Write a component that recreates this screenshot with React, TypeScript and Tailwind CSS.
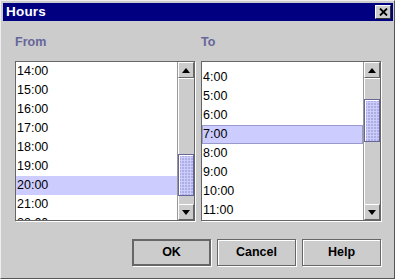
import React from "react";

const FONT = { fontFamily: '"Liberation Sans", Arial, sans-serif' };

function Arrow({ up }: { up?: boolean }) {
  return (
    <svg width="8" height="5" viewBox="0 0 8 5" className="block">
      {up ? <path d="M0 5 L4 0 L8 5 Z" fill="#000" /> : <path d="M0 0 L8 0 L4 5 Z" fill="#000" />}
    </svg>
  );
}

function ScrollButton({ up }: { up?: boolean }) {
  return (
    <div className="flex h-[16px] items-center justify-center border border-t-white border-l-white border-r-[#666666] border-b-[#666666] bg-[#cccccc]">
      <Arrow up={up} />
    </div>
  );
}

function Scrollbar({ thumbTop, thumbHeight }: { thumbTop: number; thumbHeight: number }) {
  return (
    <div className="flex w-[17px] flex-col border-l border-[#999999] bg-[#cccccc]">
      <ScrollButton up />
      <div className="relative flex-1 border-l border-t border-white">
        <div
          className="absolute left-[-1px] right-0 border border-[#666699] bg-[#ccccff] bg-[radial-gradient(circle_at_1px_1px,#8888bb_0.6px,transparent_0.8px)] bg-[length:3px_3px] shadow-[inset_1px_1px_0_#ffffff]"
          style={{ top: thumbTop, height: thumbHeight }}
        />
      </div>
      <ScrollButton />
    </div>
  );
}

function TimeList({
  items,
  selected,
  offset,
  focused,
  thumbTop,
  thumbHeight,
}: {
  items: string[];
  selected: string;
  offset: number;
  focused?: boolean;
  thumbTop: number;
  thumbHeight: number;
}) {
  return (
    <div className="flex h-[160px] border border-[#666666] bg-white shadow-[1px_1px_0_#ffffff]">
      <div className="flex-1 overflow-hidden">
        <div style={{ marginTop: offset }}>
          {items.map((t) => {
            const sel = t === selected;
            return (
              <div
                key={t}
                className={
                  sel
                    ? focused
                      ? "flex h-[19px] items-center border border-[#9999cc] bg-[#ccccff] text-[12.5px] text-black"
                      : "flex h-[19px] items-center bg-[#ccccff] pl-[1px] text-[12.5px] text-black"
                    : "flex h-[19px] items-center pl-[1px] text-[12.5px] text-black"
                }
              >
                {t}
              </div>
            );
          })}
        </div>
      </div>
      <Scrollbar thumbTop={thumbTop} thumbHeight={thumbHeight} />
    </div>
  );
}

function DialogButton({ label, primary }: { label: string; primary?: boolean }) {
  return (
    <button
      type="button"
      className={
        primary
          ? "h-[27px] w-[79px] border-2 border-[#666666] bg-[#cccccc] text-[12.5px] font-bold text-black shadow-[1px_1px_0_#ffffff]"
          : "h-[27px] w-[79px] border border-[#666666] bg-[#cccccc] text-[12.5px] font-bold text-black shadow-[inset_1px_1px_0_#ffffff,1px_1px_0_#ffffff]"
      }
    >
      {label}
    </button>
  );
}

export default function App() {
  const from = ["14:00", "15:00", "16:00", "17:00", "18:00", "19:00", "20:00", "21:00", "22:00"];
  const to = ["3:00", "4:00", "5:00", "6:00", "7:00", "8:00", "9:00", "10:00", "11:00", "12:00"];

  return (
    <div
      className="flex h-[279px] w-[395px] flex-col border border-t-[#eeeeee] border-l-[#eeeeee] border-r-[#555555] border-b-[#555555] bg-[#cccccc] p-[2px] pr-[1px]"
      style={FONT}
    >
      <div className="flex h-[18px] items-center justify-between bg-[#000080] pl-[3px] pr-[2px]">
        <span className="text-[13.5px] font-bold tracking-[0.2px] text-white">Hours</span>
        <div className="flex h-[14px] w-[16px] items-center justify-center border border-t-white border-l-white border-r-[#333333] border-b-[#333333] bg-[#cccccc]">
          <svg width="9" height="8" viewBox="0 0 9 8">
            <path d="M1 0.5 L8 7.5 M8 0.5 L1 7.5" stroke="#000" strokeWidth="1.8" />
          </svg>
        </div>
      </div>

      <div className="flex flex-1 flex-col px-[12px] pt-[14px]">
        <div className="grid grid-cols-2 gap-[6px]">
          <div>
            <div className="mb-[12px] h-[14px] text-[12.5px] font-bold leading-[14px] text-[#666699]">From</div>
            <TimeList items={from} selected="20:00" offset={0} thumbTop={75} thumbHeight={42} />
          </div>
          <div>
            <div className="mb-[12px] h-[14px] text-[12.5px] font-bold leading-[14px] text-[#666699]">To</div>
            <TimeList items={to} selected="7:00" offset={-13} focused thumbTop={20} thumbHeight={43} />
          </div>
        </div>

        <div className="mt-[18px] flex justify-end gap-[6px]">
          <DialogButton label="OK" primary />
          <DialogButton label="Cancel" />
          <DialogButton label="Help" />
        </div>
      </div>
    </div>
  );
}
